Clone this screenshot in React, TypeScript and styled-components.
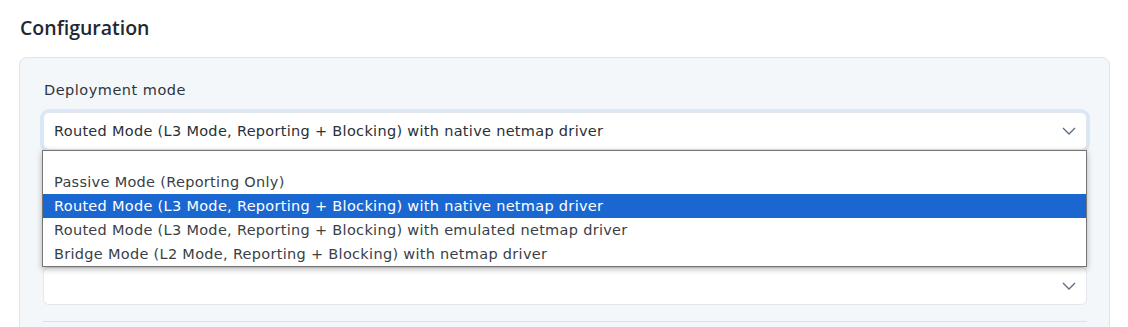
import { createGlobalStyle } from "styled-components";
import styled from "styled-components";

const modes = [
  "",
  "Passive Mode (Reporting Only)",
  "Routed Mode (L3 Mode, Reporting + Blocking) with native netmap driver",
  "Routed Mode (L3 Mode, Reporting + Blocking) with emulated netmap driver",
  "Bridge Mode (L2 Mode, Reporting + Blocking) with netmap driver",
];

const selected = 2;

const Chevron = () => (
  <svg width="14" height="8" viewBox="0 0 14 8" fill="none">
    <path d="M1 1l6 6 6-6" stroke="#5b6b7e" strokeWidth="1.3" />
  </svg>
);

const App = () => {
  return (
    <Page>
      <GlobalStyle />
      <Title>Configuration</Title>
      <Card>
        <Field>
          <Label>Deployment mode</Label>
          <SelectWrap>
            <Select $focused>
              <SelectText>{modes[selected]}</SelectText>
              <Chevron />
            </Select>
            <OptionList>
              {modes.map((m, i) => (
                <Option key={i} $empty={m === ""} $active={i === selected}>
                  {m}
                </Option>
              ))}
            </OptionList>
          </SelectWrap>
        </Field>
        <Field $top={117}>
          <Select>
            <SelectText />
            <Chevron />
          </Select>
        </Field>
        <Divider />
      </Card>
    </Page>
  );
};

const GlobalStyle = createGlobalStyle`
  body {
    margin: 0;
    background: #ffffff;
    font-family: "DejaVu Sans", "Open Sans", sans-serif;
  }
`;

const Page = styled.div`
  padding: 14px 18px 0 19px;
  height: 327px;
  overflow: hidden;
  box-sizing: border-box;
`;

const Title = styled.h2`
  margin: 0 0 0 1px;
  font-family: "Open Sans", sans-serif;
  font-size: 19.5px;
  font-weight: 600;
  color: #222831;
  line-height: 28px;
`;

const Card = styled.div`
  margin-top: 15px;
  background: #f4f7fa;
  border: 1px solid #dfe4ea;
  border-radius: 8px;
  padding: 22px 22px 40px 23px;
`;

const Field = styled.div<{ $top?: number }>`
  display: flex;
  flex-direction: column;
  margin-top: ${(p) => (p.$top ? `${p.$top}px` : "0")};
`;

const Label = styled.label`
  font-family: "DejaVu Sans", sans-serif;
  font-size: 14.5px;
  letter-spacing: 0.5px;
  color: #2f3540;
  line-height: 20px;
  margin: 0 0 12px 1px;
`;

const SelectWrap = styled.div`
  position: relative;
`;

const Select = styled.div<{ $focused?: boolean }>`
  height: 38px;
  box-sizing: border-box;
  background: #ffffff;
  border: 1px solid #e2e7ed;
  border-radius: 6px;
  display: flex;
  align-items: center;
  padding: 0 10px 0 10px;
  box-shadow: ${(p) =>
    p.$focused
      ? "0 0 0 3px rgba(200, 222, 245, 0.6), 0 2px 4px rgba(0,0,0,0.06)"
      : "none"};
`;

const SelectText = styled.span`
  flex: 1;
  font-family: "DejaVu Sans", sans-serif;
  font-size: 14.5px;
  letter-spacing: 0.3px;
  color: #2b2f36;
`;

const OptionList = styled.div`
  position: absolute;
  top: 38px;
  left: -1px;
  right: 0;
  background: #ffffff;
  border: 1px solid #767676;
  box-shadow: 0 2px 6px rgba(0, 0, 0, 0.3);
  z-index: 2;
`;

const Option = styled.div<{ $empty?: boolean; $active?: boolean }>`
  height: ${(p) => (p.$empty ? "19px" : "24px")};
  line-height: 24px;
  padding-left: 11px;
  font-family: "DejaVu Sans", sans-serif;
  font-size: 14.5px;
  letter-spacing: 0.3px;
  color: ${(p) => (p.$active ? "#ffffff" : "#3a3f47")};
  background: ${(p) => (p.$active ? "#1a67d2" : "transparent")};
  white-space: nowrap;
`;

const Divider = styled.div`
  margin-top: 16px;
  height: 1px;
  background: #dce2e8;
`;

export default App;
